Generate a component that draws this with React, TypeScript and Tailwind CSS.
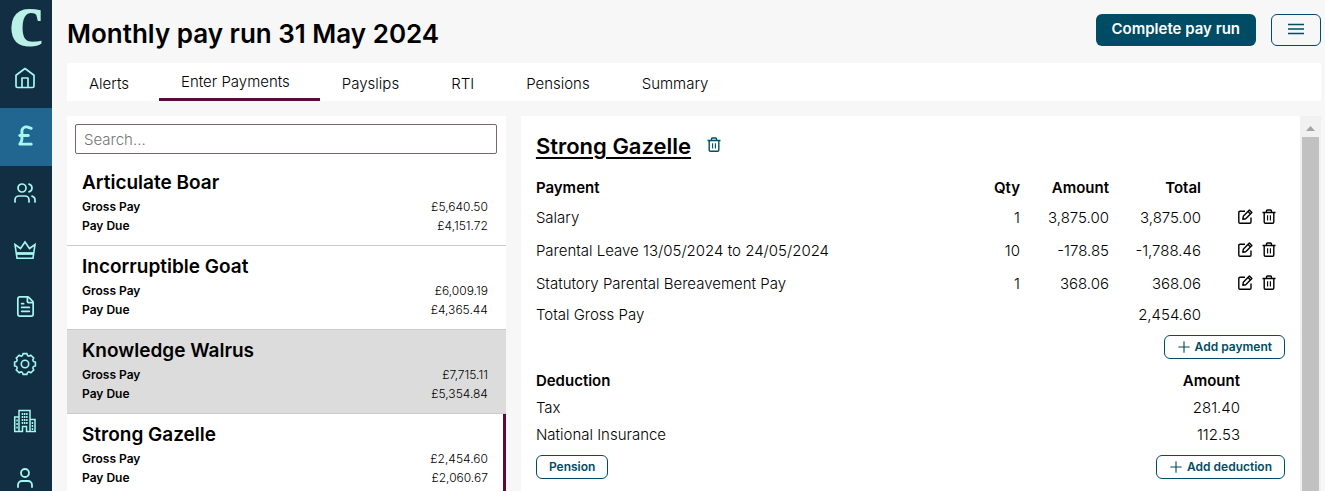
import type { ReactNode } from "react";
import { FileText, Plus, User, Users } from "lucide-react";
import { FaSterlingSign } from "react-icons/fa6";

const employees = [
  { name: "Articulate Boar", gross: "£5,640.50", due: "£4,151.72" },
  { name: "Incorruptible Goat", gross: "£6,009.19", due: "£4,365.44" },
  { name: "Knowledge Walrus", gross: "£7,715.11", due: "£5,354.84", hovered: true },
  { name: "Strong Gazelle", gross: "£2,454.60", due: "£2,060.67", selected: true },
];

const payments = [
  { label: "Salary", qty: "1", amount: "3,875.00", total: "3,875.00" },
  {
    label: "Parental Leave 13/05/2024 to 24/05/2024",
    qty: "10",
    amount: "-178.85",
    total: "-1,788.46",
  },
  {
    label: "Statutory Parental Bereavement Pay",
    qty: "1",
    amount: "368.06",
    total: "368.06",
  },
];

const deductions = [
  { label: "Tax", amount: "281.40" },
  { label: "National Insurance", amount: "112.53" },
];

const tabs = ["Alerts", "Enter Payments", "Payslips", "RTI", "Pensions", "Summary"];

function HomeIcon() {
  return (
    <svg width="22" height="22" viewBox="0 0 22 22" fill="none" stroke="currentColor" strokeWidth="1.7" strokeLinejoin="round">
      <path d="M2 8.2 11 1.5l9 6.7V19a1.5 1.5 0 0 1-1.5 1.5h-15A1.5 1.5 0 0 1 2 19Z" />
      <path d="M8 20.5V11h6v9.5" />
    </svg>
  );
}

function CrownIcon() {
  return (
    <svg width="24" height="22" viewBox="0 0 24 22" fill="none" stroke="currentColor" strokeWidth="1.6">
      <path d="M4 19.2 2 5.5l5.5 4L12 3l4.500 6.500 5.500-4-2 13.700Z" />
      <path d="M4 14.500h16" strokeWidth="2.800" />
    </svg>
  );
}

function GearIcon() {
  return (
    <svg width="24" height="24" viewBox="0 0 24 24" fill="none" stroke="currentColor" strokeWidth="1.6" strokeLinejoin="round">
      <path d="M22.400 14Q18.300 14.600 20.800 17.900L17.900 20.800Q14.600 18.300 14 22.400H10Q9.400 18.300 6.100 20.800L3.200 17.900Q5.700 14.600 1.600 14V10Q5.700 9.400 3.200 6.100L6.100 3.200Q9.400 5.700 10 1.600H14Q14.600 5.700 17.900 3.200L20.800 6.100Q18.300 9.400 22.400 10Z" />
      <circle cx="12" cy="12" r="3.700" />
    </svg>
  );
}

function BuildingIcon() {
  return (
    <svg width="24" height="24" viewBox="0 0 24 24" fill="none" stroke="currentColor" strokeWidth="1.500">
      <path d="M1.700 22.500V8H6M6 22.500V1.500h11v21M17 10.500h5v12" />
      <path d="M1 22.500h8.500v-5h4v5H23" />
      <path d="M8.700 5h1.500M10.900 5h1.500M13.100 5h1.500M8.700 8h1.500M10.900 8h1.500M13.100 8h1.500M8.700 11h1.500M10.900 11h1.500M13.100 11h1.500M8.700 14h1.500M10.900 14h1.500M13.100 14h1.500" strokeWidth="2" />
      <path d="M3.300 11.500h1.500M3.300 15h1.500M3.300 18.500h1.500M18.700 14h1.500M18.700 17h1.500M18.700 20h1.500" strokeWidth="1.800" />
    </svg>
  );
}

function TrashIcon() {
  return (
    <svg width="14" height="15" viewBox="0 0 14 15" fill="none" stroke="currentColor" strokeWidth="1.400">
      <path d="M.5 3.500h13M4.500 3.200V2a1 1 0 0 1 1-1h3a1 1 0 0 1 1 1v1.200M2.200 3.500V13a1.200 1.200 0 0 0 1.200 1.200h7.200a1.200 1.200 0 0 0 1.200-1.200V3.500" />
      <path d="M5.600 6.200v5.300M8.400 6.200v5.300" strokeWidth="1.100" />
    </svg>
  );
}

function EditIcon() {
  return (
    <svg width="15" height="15" viewBox="0 0 15 15" fill="none" stroke="currentColor" strokeWidth="1.400" strokeLinejoin="round">
      <path d="M7 2.200H2A1.200 1.200 0 0 0 .8 3.400V13A1.200 1.200 0 0 0 2 14.200h9.800A1.200 1.200 0 0 0 13 13V8.500" />
      <path d="m4.800 10.200.5-2.900L11.400 1l2.500 2.400-6.200 6.300ZM10 2.500l2.500 2.400" />
    </svg>
  );
}

function MenuIcon() {
  return (
    <svg width="16" height="12" viewBox="0 0 16 12" fill="none" stroke="currentColor" strokeWidth="1.400">
      <path d="M0 1.500h16M0 6h16M0 10.500h16" />
    </svg>
  );
}

const navItems: { label: string; icon: ReactNode; active?: boolean }[] = [
  { label: "Home", icon: <HomeIcon /> },
  { label: "Payroll", icon: <FaSterlingSign size={23} />, active: true },
  { label: "Employees", icon: <Users size={24} strokeWidth={1.7} /> },
  { label: "Directors", icon: <CrownIcon /> },
  { label: "Reports", icon: <FileText size={23} strokeWidth={1.8} /> },
  { label: "Settings", icon: <GearIcon /> },
  { label: "Companies", icon: <BuildingIcon /> },
  { label: "Account", icon: <User size={24} strokeWidth={1.8} /> },
];

function Sidebar() {
  return (
    <nav className="flex w-[52px] shrink-0 flex-col overflow-hidden bg-[#112e42] text-[#a5f8ee]">
      <a
        href="#"
        aria-label="Dashboard"
        className="flex h-[51px] shrink-0 items-center justify-center pb-3 font-['Liberation_Serif',serif] text-[78px] leading-[50px] font-bold text-[#baf0e6]"
      >
        c
      </a>
      {navItems.map((item) => (
        <a
          key={item.label}
          href="#"
          aria-label={item.label}
          className={
            item.active
              ? "flex h-[58px] shrink-0 items-center justify-center bg-[#216591] pr-0.5 pb-1"
              : "flex h-[57px] shrink-0 items-center justify-center pr-0.5 pb-1"
          }
        >
          {item.icon}
        </a>
      ))}
    </nav>
  );
}

function EmployeeList() {
  return (
    <section className="flex w-[35%] shrink-0 flex-col overflow-hidden bg-white pt-2">
      <div className="mr-[9px] ml-2 flex">
        <input
          type="text"
          aria-label="Search employees"
          placeholder="Search..."
          className="h-[30px] w-full rounded-xs border border-[#7c6370] px-2 text-[15px] font-light placeholder:text-[#757575]"
        />
      </div>
      <ul className="mt-2">
        {employees.map((e) => (
          <li
            key={e.name}
            className={`flex h-[84px] flex-col border-b border-b-[#c8cccc] pt-[7px] pl-[15px] ${
              e.hovered ? "bg-[#dcdcdc]" : ""
            } ${e.selected ? "border-r-3 border-r-[#5b0a3c] pr-[15px]" : "pr-[18px]"}`}
          >
            <h3 className="text-[19px] leading-7 font-semibold">{e.name}</h3>
            <div className="flex justify-between text-xs leading-[19px]">
              <span className="font-semibold">Gross Pay</span>
              <span className="font-light">{e.gross}</span>
            </div>
            <div className="flex justify-between text-xs leading-[19px]">
              <span className="font-semibold">Pay Due</span>
              <span className="font-light">{e.due}</span>
            </div>
          </li>
        ))}
      </ul>
    </section>
  );
}

function OutlineButton({ children }: { children: ReactNode }) {
  return (
    <button className="flex h-6 items-center gap-1 rounded-md border border-[#004c64] px-3 text-xs font-semibold text-[#004c64]">
      {children}
    </button>
  );
}

function PaymentDetail() {
  return (
    <section className="flex min-w-0 flex-1 overflow-hidden bg-white">
      <div className="min-w-0 flex-1 px-[15px] pt-[14px]">
        <div className="flex h-8 items-center gap-4">
          <h2 className="text-[22px] leading-8 font-semibold underline decoration-2 underline-offset-3">
            Strong Gazelle
          </h2>
          <button aria-label="Remove employee" className="pb-1 text-[#004c64]">
            <TrashIcon />
          </button>
        </div>

        {/* Payments */}
        <table className="mt-[13px] w-full table-fixed text-[15px] font-light">
          <thead>
            <tr className="h-[26px]">
              <th className="text-left font-semibold">Payment</th>
              <th className="w-[60px] text-right font-semibold">Qty</th>
              <th className="w-[89px] text-right font-semibold">Amount</th>
              <th className="w-[92px] text-right font-semibold">Total</th>
              <td className="w-[84px]" />
            </tr>
          </thead>
          <tbody>
            {payments.map((p) => (
              <tr key={p.label} className="h-[33px]">
                <td className="pt-0.5">{p.label}</td>
                <td className="pt-0.5 text-right">{p.qty}</td>
                <td className="pt-0.5 text-right">{p.amount}</td>
                <td className="pt-0.5 text-right">{p.total}</td>
                <td>
                  <div className="flex justify-end gap-[9px] pr-[9px] pb-0.5">
                    <button aria-label={`Edit ${p.label}`}>
                      <EditIcon />
                    </button>
                    <button aria-label={`Delete ${p.label}`}>
                      <TrashIcon />
                    </button>
                  </div>
                </td>
              </tr>
            ))}
            <tr className="h-[30px]">
              <td colSpan={3}>Total Gross Pay</td>
              <td className="text-right">2,454.60</td>
              <td />
            </tr>
          </tbody>
        </table>
        <div className="mt-[5px] flex justify-end">
          <OutlineButton>
            <Plus size={18} strokeWidth={1.5} className="-m-0.5" />
            Add payment
          </OutlineButton>
        </div>

        {/* Deductions */}
        <table className="mt-[9px] w-full text-[15px] font-light">
          <thead>
            <tr className="h-[27px]">
              <th className="text-left font-semibold">Deduction</th>
              <th className="pr-[45px] text-right font-semibold">Amount</th>
            </tr>
          </thead>
          <tbody>
            {deductions.map((d) => (
              <tr key={d.label} className="h-[27px]">
                <td>{d.label}</td>
                <td className="pr-[45px] text-right">{d.amount}</td>
              </tr>
            ))}
          </tbody>
        </table>
        <div className="mt-1.5 flex justify-between">
          <OutlineButton>Pension</OutlineButton>
          <OutlineButton>
            <Plus size={18} strokeWidth={1.5} className="-m-0.5" />
            Add deduction
          </OutlineButton>
        </div>
      </div>

      {/* Scroll bar */}
      <div className="flex w-[21px] shrink-0 flex-col items-center bg-[#f1f1f1]">
        <div className="flex h-[21px] items-center pt-1">
          <svg width="9" height="5" viewBox="0 0 9 5" fill="#a3a3a3">
            <path d="M4.500 0 9 5H0Z" />
          </svg>
        </div>
        <div className="w-[17px] flex-1 bg-[#c1c1c1]" />
      </div>
    </section>
  );
}

export default function App() {
  return (
    <div className="flex h-screen overflow-hidden bg-[#f7f7f7] font-['Inter',sans-serif] text-black">
      <Sidebar />
      <main className="flex min-w-0 flex-1 flex-col pr-1 pl-[15px]">
        <header className="flex h-[63px] shrink-0 items-center justify-between">
          <h1 className="pt-1 text-[26px] leading-8 font-semibold">
            Monthly pay run 31 May 2024
          </h1>
          <div className="flex pb-1 gap-[15px]">
            <button className="h-8 rounded-md bg-[#004c64] px-4 text-[15px] font-semibold text-white">
              Complete pay run
            </button>
            <button
              aria-label="More actions"
              className="flex h-8 w-[50px] items-center justify-center rounded-md border border-[#004c64] pb-0.5 text-[#004c64]"
            >
              <MenuIcon />
            </button>
          </div>
        </header>

        <nav className="flex h-[38px] shrink-0 bg-white text-[15px] font-light">
          {tabs.map((tab) => (
            <a
              key={tab}
              href="#"
              className={`flex items-center pt-1 pr-[30px] pl-[22px] ${
                tab === "Enter Payments" ? "border-b-3 border-[#5b0a3c]" : ""
              }`}
            >
              {tab}
            </a>
          ))}
        </nav>

        <div className="mt-[15px] flex min-h-0 flex-1 gap-[15px]">
          <EmployeeList />
          <PaymentDetail />
        </div>
      </main>
    </div>
  );
}
